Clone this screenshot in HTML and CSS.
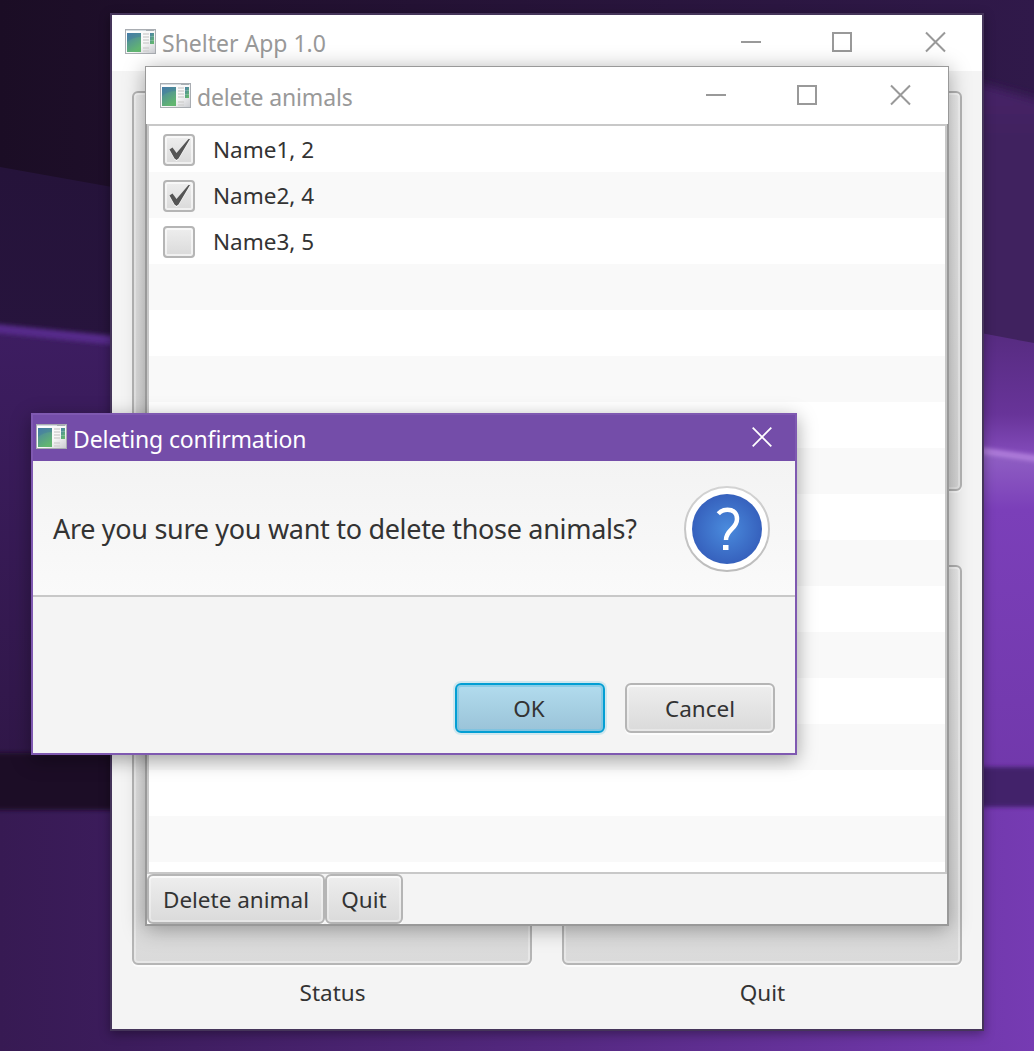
FILE: index.html
```html
<!DOCTYPE html>
<html lang="en">
<head>
<meta charset="utf-8">
<title>Shelter App 1.0</title>
<link rel="stylesheet" href="styles.css">
</head>
<body>
<svg width="0" height="0" class="defs" aria-hidden="true">
  <defs>
    <linearGradient id="pane" x1="0" y1="0" x2="0.5" y2="1"><stop offset="0" stop-color="#4a80a8"/><stop offset="1" stop-color="#62b670"/></linearGradient>
    <linearGradient id="frame" x1="0" y1="0" x2="1" y2="1"><stop offset="0" stop-color="#fff"/><stop offset="0.6" stop-color="#f7f7f7"/><stop offset="1" stop-color="#c9cbd0"/></linearGradient>
  </defs>
  <symbol id="app" viewBox="0 0 31 25">
    <rect x=".5" y=".5" width="30" height="24" fill="url(#frame)" stroke="#a9adb2"/>
    <path d="M1 1.500h29" stroke="#d3dbe0"/><path d="M21 1.500h8" stroke="#a5adb2"/>
    <rect x="2" y="4" width="14" height="19" fill="url(#pane)"/>
    <path d="M2 13q6-5 14-5V4H2z" fill="#3d73a5" opacity=".35"/>
    <path d="M18 5h6M18 8h6M18 11h6M18 14h6M18 19h6M18 22h6" stroke="#d2d2d2" stroke-width="1.400"/>
    <rect x="25" y="4" width="4" height="11" fill="url(#pane)"/>
    <path d="M25 7.500h4M25 11.500h4" stroke="#fff" stroke-opacity=".2"/>
  </symbol>
</svg>
<main class="desktop">
  <svg class="wallpaper" viewBox="0 0 1034 1051" aria-hidden="true">
    <defs>
      <linearGradient id="night" x1="0" x2="1"><stop offset="0" stop-color="#1b0d25"/><stop offset=".15" stop-color="#1f0f2b"/><stop offset="1" stop-color="#30194a"/></linearGradient>
      <linearGradient id="leftmid" x1="0" y1="0" x2="0" y2="1"><stop offset="0" stop-color="#25133a"/><stop offset="1" stop-color="#2f1849"/></linearGradient>
      <linearGradient id="leftlow" x1="0" y1="0" x2="0" y2="1"><stop offset="0" stop-color="#3d1d61"/><stop offset="1" stop-color="#301748"/></linearGradient>
      <linearGradient id="r1" x1="0" y1="0" x2="0" y2="1"><stop offset="0" stop-color="#472369"/><stop offset=".2" stop-color="#41205f"/><stop offset="1" stop-color="#41205f"/></linearGradient>
      <linearGradient id="r2" x1="0" y1="0" x2="0" y2="1"><stop offset="0" stop-color="#562b80"/><stop offset=".6" stop-color="#683499"/><stop offset="1" stop-color="#8e54c8"/></linearGradient>
      <linearGradient id="r3" x1="0" y1="0" x2="0" y2="1"><stop offset="0" stop-color="#9162c4"/><stop offset=".18" stop-color="#7b3fb9"/><stop offset="1" stop-color="#7138ab"/></linearGradient>
      <linearGradient id="floor" x1="0" x2="1"><stop offset="0" stop-color="#371a53"/><stop offset=".12" stop-color="#3c1c5c"/><stop offset=".55" stop-color="#552982"/><stop offset="1" stop-color="#763bb3"/></linearGradient>
      <filter id="soft" filterUnits="userSpaceOnUse" x="-20" y="-20" width="1100" height="1100"><feGaussianBlur stdDeviation="2"/></filter>
      <filter id="softer" filterUnits="userSpaceOnUse" x="-20" y="-20" width="1100" height="1100"><feGaussianBlur stdDeviation="5"/></filter>
    </defs>
    <rect width="1034" height="1051" fill="url(#night)"/>
    <path d="M0 167L112 187V1051H0z" fill="url(#leftmid)"/>
    <path d="M0 330L112 342V760H0z" fill="url(#leftlow)"/>
    <path d="M-18 327L130 342" stroke="#572a8b" stroke-width="9" filter="url(#soft)"/>
    <path d="M960 78L1060 106V370H960z" fill="url(#r1)" filter="url(#softer)"/>
    <path d="M970 331L1034 343V470H970z" fill="url(#r2)"/>
    <path d="M970 450L1034 459V780H970z" fill="url(#r3)"/>
    <path d="M970 449L1054 461" stroke="#b17fdc" stroke-width="6" filter="url(#soft)"/>
    <rect y="800" width="1034" height="251" fill="url(#floor)"/>
    <rect x="-10" y="753" width="300" height="57" fill="#1b0c25" filter="url(#soft)"/>
    <rect x="900" y="767" width="150" height="40" fill="#43216a" filter="url(#soft)"/>
  </svg>

  <section class="window shelter">
    <header class="titlebar">
      <svg class="logo"><use href="#app"/></svg>
      <h1 class="title">Shelter App 1.0</h1>
      <svg class="controls" viewBox="0 0 206 22"><path d="M0 11h20"/><path class="crisp" d="M92 2h18v18h-18z"/><path d="M185 1.500l19 19M204 1.500l-19 19"/></svg>
    </header>
    <div class="tiles">
      <div class="tile"><div class="button big"></div></div>
      <div class="tile"><div class="button big"></div></div>
      <div class="tile"><div class="button big"></div><span class="caption">Status</span></div>
      <div class="tile"><div class="button big"></div><span class="caption">Quit</span></div>
    </div>
  </section>

  <section class="window animals">
    <header class="titlebar">
      <svg class="logo"><use href="#app"/></svg>
      <h2 class="title">delete animals</h2>
      <svg class="controls" viewBox="0 0 206 22"><path d="M0 11h20"/><path class="crisp" d="M92 2h18v18h-18z"/><path d="M185 1.500l19 19M204 1.500l-19 19"/></svg>
    </header>
    <div class="content">
      <ul class="list">
        <li><span class="check"><svg viewBox="0 0 32 32"><path d="M6.500 15.500L9.500 13.500 13.500 19 25.500 5H27L15.500 24.500 13.500 26 11.500 24.500z"/></svg></span><span>Name1, 2</span></li>
        <li><span class="check"><svg viewBox="0 0 32 32"><path d="M6.500 15.500L9.500 13.500 13.500 19 25.500 5H27L15.500 24.500 13.500 26 11.500 24.500z"/></svg></span><span>Name2, 4</span></li>
        <li><span class="check"></span><span>Name3, 5</span></li>
      </ul>
      <footer class="toolbar">
        <div class="button b-delete">Delete animal</div>
        <div class="button b-quit">Quit</div>
      </footer>
    </div>
  </section>

  <section class="window dialog">
    <header class="titlebar">
      <svg class="logo"><use href="#app"/></svg>
      <h2 class="title">Deleting confirmation</h2>
      <svg class="close" viewBox="0 0 20 20"><path d="M.7.7l18.600 18.600M19.300.7L.7 19.300"/></svg>
    </header>
    <div class="question">
      <p class="message">Are you sure you want to delete those animals?</p>
      <svg class="help" viewBox="0 0 86 86">
        <defs>
          <radialGradient id="blue"><stop offset="0" stop-color="#4a8bdd"/><stop offset="1" stop-color="#3661bd"/></radialGradient>
          <linearGradient id="ring" x1="0" y1="0" x2="0" y2="1"><stop offset="0" stop-color="#d3d3d3"/><stop offset="1" stop-color="#bcbcbc"/></linearGradient>
        </defs>
        <circle cx="43" cy="43" r="42" fill="#fff" stroke="url(#ring)" stroke-width="2"/>
        <circle cx="43" cy="43" r="35" fill="url(#blue)"/>
        <path d="M34.300 27.800Q38 23.800 43.500 23.800C50 23.800 53 27.500 53 33C53 43 42 43.500 42 54" fill="none" stroke="#fff" stroke-width="4.500"/>
        <rect x="39" y="59" width="5.500" height="5" fill="#fff"/>
      </svg>
    </div>
    <div class="actions">
      <div class="button primary">OK</div>
      <div class="button">Cancel</div>
    </div>
  </section>
</main>
</body>
</html>
```
FILE: styles.css
```css
* { box-sizing: border-box; }
body { margin: 0; font-family: "Noto Sans", sans-serif; font-size: 22.5px; color: #333; }
.defs { position: absolute; }
.desktop { position: relative; width: 1034px; height: 1051px; overflow: hidden; }
.wallpaper { position: absolute; inset: 0; width: 1034px; height: 1051px; }
.window { position: absolute; display: flex; flex-direction: column; background: #f4f4f4; }
.titlebar { display: flex; align-items: center; flex: none; background: #fff; color: #999; }
.title { margin: 0; font-size: 23px; font-weight: 400; line-height: 32px; white-space: nowrap; }
.logo { width: 31px; height: 25px; flex: none; margin-top: -1px; }
.controls { width: 206px; height: 22px; margin-left: auto; fill: none; stroke: #999; stroke-width: 2; overflow: visible; }
.crisp { shape-rendering: crispEdges; }

.shelter { left: 110px; top: 13px; width: 874px; height: 1018px; border: 2px solid #45355a; background-clip: padding-box; box-shadow: 0 3px 10px rgba(0, 0, 0, .35); }
.shelter .titlebar { height: 56px; padding: 0 35px 2px 13px; }
.shelter .title { margin: 2px 0 0 6px; }
.tiles { display: grid; grid-template-columns: 400px 400px; grid-auto-rows: 474px; column-gap: 30px; padding: 20px; }
.tile { display: flex; flex-direction: column; align-items: center; }
.caption { margin-top: 12px; padding-left: 1px; line-height: 32px; }

.button { display: flex; align-items: center; justify-content: center; border: 2px solid #b5b5b5; border-radius: 6px; background: linear-gradient(#eee, #dadada); box-shadow: inset 0 0 0 2px rgba(255, 255, 255, .35), inset 0 2px 0 rgba(255, 255, 255, .5), 0 2px 0 rgba(255, 255, 255, .7); white-space: nowrap; }
.big { width: 400px; height: 400px; flex: none; }

.animals { left: 145px; top: 66px; width: 804px; height: 860px; background: #999; padding: 1px; box-shadow: 0 3px 20px rgba(0, 0, 0, .34); }
.animals .titlebar { height: 57px; padding: 0 36px 0 14px; }
.animals .title { margin: 2px 0 0 6px; letter-spacing: -.15px; }
.animals .controls { margin-top: -2px; }
.content { display: flex; flex-direction: column; flex: 1; margin: 0 1px 1px; background: #f4f4f4; overflow: hidden; }
.list { list-style: none; margin: 0; padding: 0; height: 750px; border: 2px solid #c8c8c8; background: repeating-linear-gradient(#fff 0 46px, #f9f9f9 46px 92px); }
.list li { height: 46px; display: flex; align-items: center; gap: 18px; padding-left: 14px; }
.check { width: 32px; height: 32px; margin-top: 2px; border: 2px solid #b5b5b5; border-radius: 4px; background: linear-gradient(#eee, #dadada); box-shadow: inset 0 0 0 2px rgba(255, 255, 255, .6); }
.check svg { display: block; width: 32px; height: 32px; margin: -2px; fill: #555; filter: drop-shadow(0 1px 0 #fff); }
.toolbar { display: flex; align-items: stretch; height: 50px; }
.b-delete { width: 178px; }
.b-quit { width: 78px; }

.dialog { left: 31px; top: 413px; width: 766px; height: 342px; border: 2px solid #7f59b1; box-shadow: 0 5px 18px rgba(0, 0, 0, .36); }
.dialog .titlebar { height: 46px; padding: 0 23px 0 3px; background: #744da9; color: #fff; }
.dialog .logo { margin-top: -3px; }
.dialog .title { margin: 1px 0 0 6px; letter-spacing: -.15px; }
.close { width: 20px; height: 20px; margin: -2px 0 0 auto; stroke: #fff; stroke-width: 1.8; fill: none; }
.question { display: flex; align-items: center; justify-content: space-between; height: 136px; padding: 0 25px 0 20px; border-bottom: 2px solid #c8c8c8; background: linear-gradient(#f3f3f3, #fafafa); }
.message { margin: 0; font-size: 27px; letter-spacing: -.31px; white-space: nowrap; }
.help { width: 86px; height: 86px; margin-top: 2px; flex: none; }
.actions { display: flex; justify-content: flex-end; gap: 20px; padding: 86px 20px 0; }
.actions .button { width: 150px; height: 50px; }
.actions .primary { padding-right: 2px; border-color: #039ed3; background: linear-gradient(#b2dcee, #9ac3d8); box-shadow: inset 0 0 0 2px rgba(110, 195, 228, .6), 0 0 0 2px rgba(3, 158, 211, .15); }
```
